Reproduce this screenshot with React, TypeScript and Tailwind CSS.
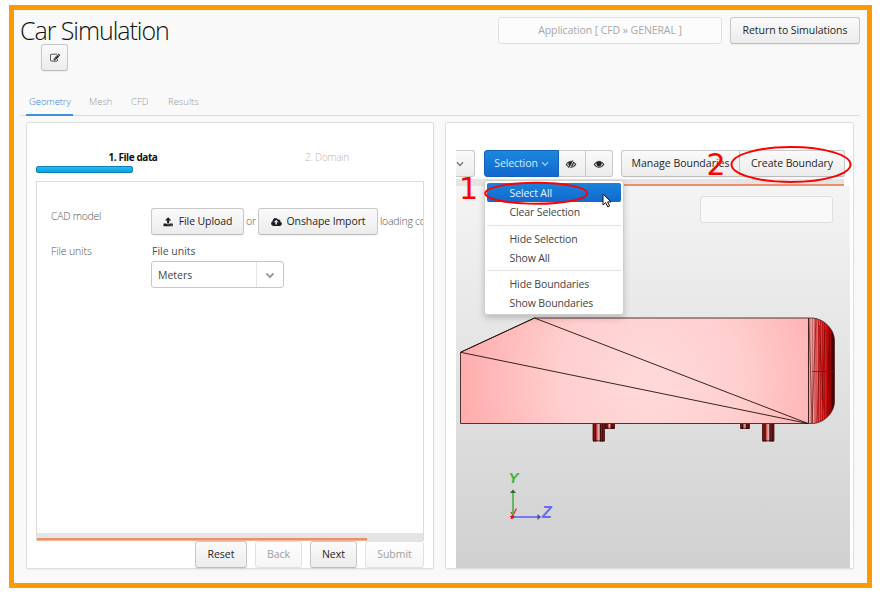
import React from 'react';

const PATHS = {
  edit: 'M888 1184l116-116-152-152-116 116v56h96v96h56zm440-720q-16-16-33 1l-350 350q-17 17-1 33t33-1l350-350q17-17 1-33zm80 594v190q0 119-84.5 203.5t-203.5 84.5h-832q-119 0-203.5-84.5t-84.5-203.5v-832q0-119 84.5-203.5t203.5-84.5h832q63 0 117 25 15 7 18 23 3 17-9 29l-49 49q-14 14-32 8-23-6-45-6h-832q-66 0-113 47t-47 113v832q0 66 47 113t113 47h832q66 0 113-47t47-113v-126q0-13 9-22l64-64q15-15 35-7t20 29zm-96-738l288 288-672 672h-288v-288zm444 132l-92 92-288-288 92-92q28-28 68-28t68 28l152 152q28 28 28 68t-28 68z',
  upload: 'M1344 1472q0-26-19-45t-45-19-45 19-19 45 19 45 45 19 45-19 19-45zm256 0q0-26-19-45t-45-19-45 19-19 45 19 45 45 19 45-19 19-45zm128-224v320q0 40-28 68t-68 28h-1472q-40 0-68-28t-28-68v-320q0-40 28-68t68-28h427q21 56 70.5 92t110.5 36h256q61 0 110.5-36t70.5-92h427q40 0 68 28t28 68zm-325-648q-17 40-59 40h-256v448q0 26-19 45t-45 19h-256q-26 0-45-19t-19-45v-448h-256q-42 0-59-40-17-39 14-69l448-448q18-19 45-19t45 19l448 448q31 30 14 69z',
  cloud: 'M1280 928q0-14-9-23l-352-352q-9-9-23-9t-23 9l-351 351q-10 12-10 24 0 14 9 23t23 9h224v352q0 13 9.5 22.5t22.5 9.5h192q13 0 22.5-9.5t9.5-22.5v-352h224q13 0 22.5-9.5t9.5-22.5zm640 288q0 159-112.5 271.5t-271.5 112.5h-1088q-185 0-316.5-131.5t-131.5-316.5q0-130 70-240t188-165q-2-30-2-43 0-212 150-362t362-150q156 0 285.5 87t188.5 231q71-62 166-62 106 0 181 75t75 181q0 76-41 138 130 31 213.5 135.5t83.5 238.5z',
  eye: 'M1664 960q-152-236-381-353 61 104 61 225 0 185-131.5 316.5t-316.5 131.5-316.5-131.5-131.5-316.5q0-121 61-225-229 117-381 353 133 205 333.5 326.5t434.5 121.5 434.5-121.5 333.5-326.5zm-720-384q0-20-14-34t-34-14q-125 0-214.5 89.5t-89.5 214.5q0 20 14 34t34 14 34-14 14-34q0-86 61-147t147-61q20 0 34-14t14-34zm848 384q0 34-20 69-140 230-376.5 368.5t-499.5 138.5-499.5-139-376.5-368q-20-35-20-69t20-69q140-229 376.5-368t499.5-139 499.5 139 376.5 368q20 35 20 69z',
};

function Icon({ name, className }: { name: keyof typeof PATHS; className: string }) {
  return (
    <svg viewBox="0 0 1920 1792" className={className} fill="currentColor">
      <path d={PATHS[name]} />
    </svg>
  );
}

function Eye() {
  return (
    <svg viewBox="0 0 1792 1792" className="h-[10px] w-[10px] overflow-visible" fill="currentColor">
      <path d={PATHS.eye} stroke="currentColor" strokeWidth="60" />
      <circle cx="896" cy="840" r="380" />
    </svg>
  );
}

function EyeSlash() {
  return (
    <svg viewBox="0 0 1792 1792" className="h-[10px] w-[10px] overflow-visible" fill="currentColor">
      <path d={PATHS.eye} stroke="currentColor" strokeWidth="60" />
      <circle cx="896" cy="840" r="340" />
      <path d="M1400 200L600 1640" stroke="#f4f4f4" strokeWidth="170" />
      <path d="M1240 200L440 1640" stroke="currentColor" strokeWidth="130" />
    </svg>
  );
}

function Chevron({ className, width = 1.4 }: { className: string; width?: number }) {
  return (
    <svg viewBox="0 0 8 6" className={className} fill="none" stroke="currentColor" strokeWidth={width}>
      <path d="M1 1.2L4 4.4L7 1.2" />
    </svg>
  );
}

const BTN =
  'flex shrink-0 items-center justify-center whitespace-nowrap rounded-[3px] border border-[#c9c9c9] border-b-[#bcbcbc] bg-linear-to-b from-[#fafafa] to-[#ececec] text-[#1f1f1f] shadow-[0_1px_2px_rgba(0,0,0,0.06)]';
const BTN_OFF =
  'flex shrink-0 items-center justify-center whitespace-nowrap rounded-[3px] border border-[#e2e2e2] bg-linear-to-b from-[#fdfdfd] to-[#f6f6f6] text-[#a0a0a0]';

function Header() {
  return (
    <header className="flex h-[73px] justify-between pl-[7px] pr-[7px]">
      <div className="pt-[4px]">
        <h1 className="ml-[-1px] h-[30px] whitespace-nowrap text-[25px] font-light leading-[32px] tracking-[-1.05px] text-[#111]">Car Simulation</h1>
        <button className={BTN + ' ml-[20px] h-[27px] w-[27px]'}>
          <Icon name="edit" className="ml-[1px] h-[10px] w-[11px]" />
        </button>
      </div>
      <div className="flex gap-2 pt-[7px]">
        <div className="flex h-[27px] w-[224px] items-center justify-center rounded-[3px] border border-[#e0e0e0] bg-[#fcfcfc] pt-px text-[10.5px] tracking-[-0.08px] text-[#a8a8a8]">
          Application [ CFD » GENERAL ]
        </div>
        <button className={BTN + ' h-[27px] w-[130px] pt-px tracking-[-0.06px]'}>Return to Simulations</button>
      </div>
    </header>
  );
}

function Tabs() {
  return (
    <nav className="ml-[6px] mr-[7px] flex h-[33px] border-b border-[#dcdcdc] pl-[6px] text-[9.5px] font-light leading-[38px] text-[#999]">
      <span className="mb-[-1px] w-[47px] border-b-2 border-[#3f8fe0] pl-[3px] tracking-[-0.1px] text-[#2f85dc]">Geometry</span>
      <span className="ml-[16px] w-[42px]">Mesh</span>
      <span className="w-[37px]">CFD</span>
      <span>Results</span>
    </nav>
  );
}

const LABEL = 'text-[10.5px] font-light text-[#555]';

function GeometryPanel() {
  return (
    <section className="flex h-[447px] w-[408px] flex-col rounded-[2px] border border-[#dfdfdf] bg-white px-[9px] shadow-[0_1px_2px_rgba(0,0,0,0.05)]">
      <div className="flex h-[58px] shrink-0 pt-[27px] text-[10px] leading-[15px]">
        <div className="w-[194px]">
          <div className="h-[16px] text-center font-bold tracking-[-0.42px] text-[#111]">1. File data</div>
          <div className="h-[7px] w-[97px] rounded-[2px] border border-[#0f7fbb] bg-linear-to-b from-[#1fc0f2] to-[#0c9fdc]" />
        </div>
        <div className="w-[194px] text-center font-light tracking-[-0.2px] text-[#b5b5b5]">2. Domain</div>
      </div>
      <div className="h-[360px] shrink-0 overflow-hidden border border-b-0 border-[#dcdcdc]">
        <div className="flex h-[351px] flex-col pl-[14px] pt-[26px]">
          <div className="flex h-[27px] whitespace-nowrap">
            <span className={LABEL + ' w-[100px] shrink-0 leading-[17px] tracking-[-0.3px]'}>CAD model</span>
            <button className={BTN + ' w-[93px] gap-[5px] tracking-[-0.1px]'}>
              <Icon name="upload" className="h-[10px] w-[11px]" />File Upload
            </button>
            <span className={LABEL + ' w-[14px] shrink-0 text-center leading-[27px]'}>or</span>
            <button className={BTN + ' w-[120px] gap-[5px] tracking-[-0.1px]'}>
              <Icon name="cloud" className="h-[10px] w-[11px]" />Onshape Import
            </button>
            <span className={LABEL + ' ml-[2px] w-[44px] overflow-hidden leading-[27px] tracking-[-0.25px]'}>loading co</span>
          </div>
          <div className="flex pt-[8px]">
            <span className={LABEL + ' w-[100px] shrink-0 leading-[17px] tracking-[-0.1px]'}>File units</span>
            <div>
              <div className="h-[18px] pl-px text-[10.5px] leading-[17px] text-[#4c4c4c]">File units</div>
              <div className="flex h-[27px] w-[133px] rounded-[3px] border border-[#c6c6c6] text-[#444]">
                <span className="w-[105px] border-r border-[#e4e4e4] pl-[6px] text-[10.5px] leading-[26px]">Meters</span>
                <span className="flex flex-1 items-center justify-center pt-[2px] text-[#999]"><Chevron className="h-[7px] w-[10px]" width={1.7} /></span>
              </div>
            </div>
          </div>
        </div>
        <div className="h-[8px] bg-[#e4e4e4] pt-[5px]">
          <div className="h-[3px] w-[330px] border-b border-[#f3b49b] bg-[#ec8f6c]" />
        </div>
      </div>
      <div className="flex h-[27px] shrink-0 justify-end gap-2 text-[10.5px]">
        <button className={BTN + ' w-[52px] pt-px'}>Reset</button>
        <button className={BTN_OFF + ' w-[47px] pt-px'}>Back</button>
        <button className={BTN + ' w-[47px] pt-px'}>Next</button>
        <button className={BTN_OFF + ' w-[59px] pt-px'}>Submit</button>
      </div>
    </section>
  );
}

const ITEM = 'h-[19.3px] rounded-[2px] pl-[23px] leading-[20px]';

function SelectionMenu() {
  return (
    <div className="absolute left-[-0.5px] top-[30px] z-10 h-[135px] w-[140px] rounded-[3px] border border-[#d0d0d0] bg-white p-[2px] text-[10.5px] tracking-[-0.12px] text-[#444] shadow-[0_3px_6px_rgba(0,0,0,0.2)]">
      <div className={ITEM + ' bg-linear-to-b from-[#1a83dc] to-[#1368cf] text-[#e8f2fc]'}>Select All</div>
      <div className={ITEM}>Clear Selection</div>
      <div className="my-[3px] h-px bg-[#e4e4e4]" />
      <div className={ITEM}>Hide Selection</div>
      <div className={ITEM}>Show All</div>
      <div className="my-[3px] h-px bg-[#e4e4e4]" />
      <div className={ITEM}>Hide Boundaries</div>
      <div className={ITEM}>Show Boundaries</div>
      <svg className="absolute left-[117px] top-[12px] h-[15px] w-[10px]" viewBox="0 0 10 15">
        <path d="M1 1V12L3.7 9.6L5.8 14L7.6 13.1L5.6 8.9H9Z" fill="#fff" stroke="#111" strokeWidth="1" />
      </svg>
    </div>
  );
}

function Toolbar() {
  return (
    <div className="flex h-[27px] w-[389px]">
      <div className="flex w-[19px] items-center rounded-r-[3px] border border-l-0 border-[#c9c9c9] bg-linear-to-b from-[#fafafa] to-[#ececec] text-[#777]">
        <Chevron className="h-[6px] w-[8px]" />
      </div>
      <div className="relative ml-[9px] flex w-[129px]">
        <button className="flex w-[75px] items-center justify-center gap-[3px] rounded-l-[3px] border border-[#1362b8] bg-linear-to-b from-[#1b87de] to-[#1268cf] tracking-[-0.1px] text-[#d9ebfb]">
          Selection<Chevron className="h-[6px] w-[8px] opacity-80" width={1.1} />
        </button>
        <button className="flex w-[27px] items-center justify-center border border-l-0 border-[#c9c9c9] bg-linear-to-b from-[#fafafa] to-[#ececec] pr-[2px] text-[#222]"><EyeSlash /></button>
        <button className="flex w-[27px] items-center justify-center rounded-r-[3px] border border-l-0 border-[#c9c9c9] bg-linear-to-b from-[#fafafa] to-[#ececec] text-[#222]"><Eye /></button>
        <SelectionMenu />
      </div>
      <button className={BTN + ' ml-[8px] w-[119px] rounded-r-none pt-px'}>Manage Boundaries</button>
      <button className={BTN + ' w-[105px] rounded-l-none border-l-0 pt-px tracking-[-0.06px]'}>Create Boundary</button>
    </div>
  );
}

const CAP_LINES: [number, string, number][] = [
  [810.5, '#e09090', 1.5], [812.5, '#8c4444', 0.5], [814.5, '#d06060', 0.8], [816, '#6b1818', 0.5], [818.5, '#9d0808', 0.6],
  [820.5, '#7a0303', 0.5], [822.5, '#9b0505', 0.6], [824.3, '#5a0000', 0.6], [826.2, '#8a0000', 0.6], [828, '#500', 0.7],
  [829.8, '#400', 0.7], [831.5, '#300', 0.8], [832.8, '#200', 0.9], [834, '#300', 0.8],
];

function Peg({ x, w, h }: { x: number; w: number; h: number }) {
  return (
    <g>
      <rect x={x} y="424" width={w} height={h} fill="url(#peg)" />
      <path d={`M${x + w * 0.22} 424v${h}M${x + w * 0.65} 424v${h}M${x + w * 0.85} 424v${h}`} stroke="#210000" strokeWidth="0.8" />
      <path d={`M${x} 424v${h - 0.7}h${w}v${-h + 0.7}`} fill="none" stroke="#2b0000" strokeWidth="0.7" />
    </g>
  );
}

function Scene() {
  return (
    <svg viewBox="456 186 394 382" className="block h-[382px] w-[394px]">
      <defs>
        <radialGradient id="body" gradientUnits="userSpaceOnUse" cx="650" cy="378" r="200">
          <stop offset="0" stopColor="#ffdada" />
          <stop offset="0.45" stopColor="#ffcfcf" />
          <stop offset="1" stopColor="#ffa9a9" />
        </radialGradient>
        <linearGradient id="cap">
          <stop offset="0" stopColor="#ffb0b0" />
          <stop offset="0.22" stopColor="#ff8888" />
          <stop offset="0.42" stopColor="#ff3838" />
          <stop offset="0.68" stopColor="#fa1616" />
          <stop offset="0.85" stopColor="#b80000" />
          <stop offset="1" stopColor="#500000" />
        </linearGradient>
        <linearGradient id="peg">
          <stop offset="0" stopColor="#7a0000" />
          <stop offset="0.25" stopColor="#b52020" />
          <stop offset="0.5" stopColor="#e8b8b8" />
          <stop offset="0.7" stopColor="#802020" />
          <stop offset="1" stopColor="#c00000" />
        </linearGradient>
        <clipPath id="capClip">
          <path d="M808 318H813C824 319 834.5 329 834.5 341V401C834.5 413 824 423 813 423.5H808Z" />
        </clipPath>
      </defs>
      <path d="M460.5 352.3L534.5 318H808.5V423.5H460.5Z" fill="url(#body)" stroke="#4d3434" strokeWidth="1" />
      <path d="M534.5 318L808 423.5L460.5 352.3L534.5 318" fill="none" stroke="#201010" strokeWidth="0.9" />
      <g clipPath="url(#capClip)">
        <rect x="808" y="318" width="27" height="106" fill="url(#cap)" />
        {CAP_LINES.map(([x, c, w]) => (
          <path key={x} d={`M${x} 318V424`} stroke={c} strokeWidth={w} />
        ))}
        <path d="M809 318L812 423M812 423L816 318M817 423L820 345M822 400L825 330M819 325L824 410M827 415L829 345" fill="none" stroke="#5c1010" strokeWidth="0.6" />
        <path d="M812 371.5H835" stroke="#7d1010" strokeWidth="0.8" />
      </g>
      <path d="M808.5 318H813C824 319 834.5 329 834.5 341V401C834.5 413 824 423 813 423.5H808.5Z" fill="none" stroke="#4d2a2a" strokeWidth="0.8" />
      <path d="M808.5 318V423.5" stroke="#3a2020" strokeWidth="0.9" />
      <Peg x={593} w={11.5} h={17.5} />
      <Peg x={605} w={9.5} h={5} />
      <Peg x={740.5} w={9} h={5} />
      <Peg x={762.5} w={11.5} h={17.5} />
      <path d="M510 516.5H516M511 519L516.5 508.5M511 512L514 517" stroke="#e81c1c" strokeWidth="1.2" />
      <path d="M513 516V492" stroke="#49b049" strokeWidth="1.6" />
      <path d="M510 493L513 489.5L516 493Z" fill="#2c6a2c" />
      <path d="M513 517H538" stroke="#6b6bff" strokeWidth="1.8" />
      <path d="M537.5 514L541 517L537.5 520Z" fill="#4a4a90" />
      <circle cx="512.5" cy="517" r="1.8" fill="#e01818" />
      <text x="508.5" y="483.3" fontSize="15.5" fontStyle="italic" fontWeight="bold" fontFamily="Liberation Sans, sans-serif" fill="#3fb53f" textLength="10" lengthAdjust="spacingAndGlyphs">Y</text>
      <text x="541.8" y="517.8" fontSize="17" fontStyle="italic" fontWeight="bold" fontFamily="Liberation Sans, sans-serif" fill="#6969f5" textLength="10" lengthAdjust="spacingAndGlyphs">Z</text>
    </svg>
  );
}

function ViewerPanel() {
  return (
    <section className="h-[447px] w-[409px] rounded-[2px] border border-[#dfdfdf] bg-white pl-[10px] pt-[27px] shadow-[0_1px_2px_rgba(0,0,0,0.05)]">
      <Toolbar />
      <div className="mt-[2px] flex h-[7px] w-[388px] items-end justify-end bg-[#e4e4e4]">
        <div className="h-[2px] w-[240px] bg-[#ee8e6c]" />
      </div>
      <div className="relative h-[382px] w-[394px] overflow-hidden bg-linear-to-b from-[#f4f4f4] to-[#d0d0d0]">
        <Scene />
        <div className="absolute left-[244px] top-[10px] h-[27px] w-[133px] rounded-[3px] border border-[#dedede] bg-[#f9f9f9]" />
      </div>
    </section>
  );
}

function Annotations() {
  return (
    <svg className="pointer-events-none absolute left-0 top-0 z-20 h-[596px] w-[880px]" viewBox="0 0 880 596">
      <ellipse cx="536.2" cy="193.3" rx="51" ry="10.5" fill="none" stroke="#f00" strokeWidth="2" />
      <ellipse cx="791" cy="164.5" rx="59.5" ry="17.5" fill="none" stroke="#f00" strokeWidth="2" />
      <text x="459" y="198.8" fontFamily="DejaVu Sans, sans-serif" fontSize="30" fill="#f00">1</text>
      <text x="706.5" y="175" fontFamily="DejaVu Sans, sans-serif" fontSize="30" fill="#f00">2</text>
    </svg>
  );
}

export default function App() {
  return (
    <div className="relative h-[596px] w-[880px] overflow-hidden bg-white pl-[9px] pt-[5px] font-['Open_Sans','Noto_Sans',sans-serif] text-[10.5px]">
      <main className="h-[583px] w-[863px] border-[5px] border-[#ff9900] bg-[#f9f9f9]">
        <Header />
        <Tabs />
        <div className="flex gap-[11px] pl-[12px] pt-[6px]">
          <GeometryPanel />
          <ViewerPanel />
        </div>
      </main>
      <Annotations />
    </div>
  );
}
